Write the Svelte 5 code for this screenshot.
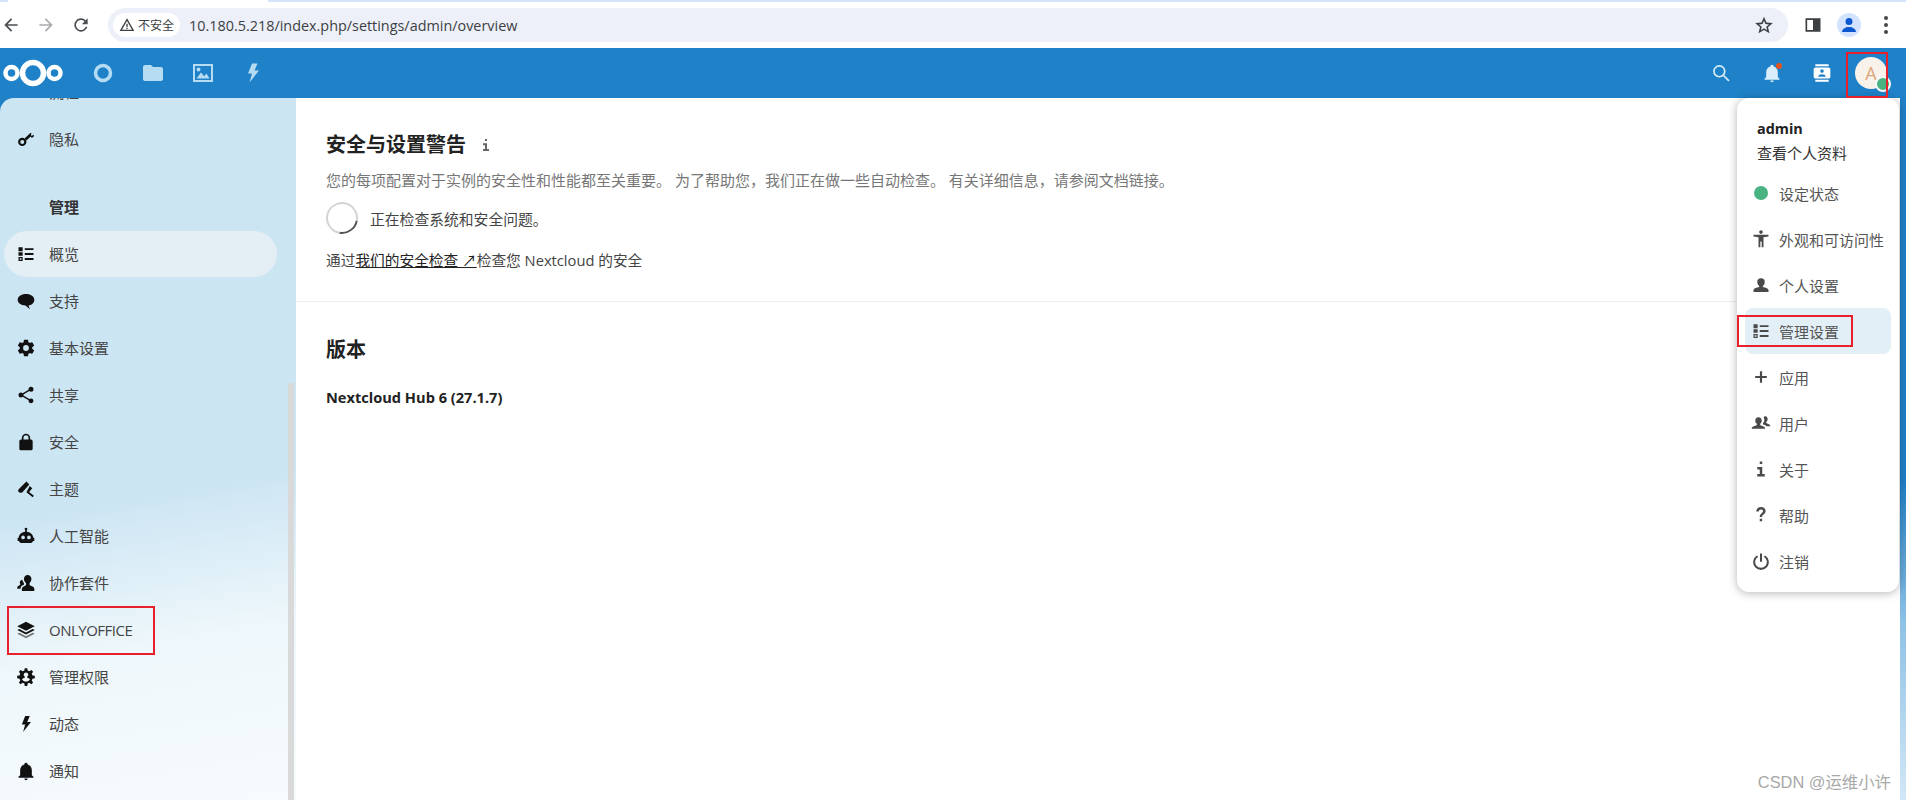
<script>
  const icons = {
    key: "M7.5 10.5a5 5 0 1 0 0 10 5 5 0 0 0 0-10zm0 2.6a2.4 2.4 0 1 1 0 4.8 2.4 2.4 0 0 1 0-4.8zM10.6 11.2 17.5 4.6l1.2 1.2-1 1 1.3 1.6 1.7-1.4 1.2 1.5-2 1.7-1.2.2-1-1.3-5.6 5.1z",
    list: "M3 4h5v4.600H3zM10.500 5h10.500v2.300H10.500zM10.500 10.900h10.500v2.300H10.500zM10.500 16.800h10.500v2.300H10.500zM3 10h5v4.200H3zM3 15.600h5v4.800H3zM4.500 17v2h2v-2z",
    chat: "M12 3.5c5.8 0 10 3 10 7s-3.600 6.600-7 6.900l1.600 4.600-5.200-4.600C6 17 2 14.500 2 10.500s4.200-7 10-7z",
    cog: "M12,15.5A3.5,3.5 0 0,1 8.5,12A3.5,3.5 0 0,1 12,8.5A3.5,3.5 0 0,1 15.5,12A3.5,3.5 0 0,1 12,15.5M19.43,12.97C19.47,12.65 19.5,12.33 19.5,12C19.5,11.67 19.47,11.34 19.43,11L21.54,9.37C21.73,9.22 21.78,8.95 21.66,8.73L19.66,5.27C19.54,5.05 19.27,4.96 19.05,5.05L16.56,6.05C16.04,5.66 15.5,5.32 14.87,5.07L14.5,2.42C14.46,2.18 14.25,2 14,2H10C9.75,2 9.54,2.18 9.5,2.42L9.13,5.07C8.5,5.32 7.96,5.66 7.44,6.05L4.95,5.05C4.73,4.96 4.46,5.05 4.34,5.27L2.34,8.73C2.21,8.95 2.27,9.22 2.46,9.37L4.57,11C4.53,11.34 4.5,11.67 4.5,12C4.5,12.33 4.53,12.65 4.57,12.97L2.46,14.63C2.27,14.78 2.21,15.05 2.34,15.27L4.34,18.73C4.46,18.95 4.73,19.03 4.95,18.95L7.44,17.94C7.96,18.34 8.5,18.68 9.13,18.93L9.5,21.58C9.54,21.82 9.75,22 10,22H14C14.25,22 14.46,21.82 14.5,21.58L14.87,18.93C15.5,18.67 16.04,18.34 16.56,17.94L19.05,18.95C19.27,19.03 19.54,18.95 19.66,18.73L21.66,15.27C21.78,15.05 21.73,14.78 21.54,14.63L19.43,12.97Z",
    share: "M18,16.08C17.24,16.08 16.56,16.38 16.04,16.85L8.91,12.7C8.96,12.47 9,12.24 9,12C9,11.76 8.96,11.53 8.91,11.3L15.96,7.19C16.5,7.69 17.21,8 18,8A3,3 0 0,0 21,5A3,3 0 0,0 18,2A3,3 0 0,0 15,5C15,5.24 15.04,5.47 15.09,5.7L8.04,9.81C7.5,9.31 6.79,9 6,9A3,3 0 0,0 3,12A3,3 0 0,0 6,15C6.79,15 7.5,14.69 8.04,14.19L15.16,18.34C15.11,18.55 15.08,18.77 15.08,19C15.08,20.61 16.39,21.91 18,21.91C19.61,21.91 20.92,20.61 20.92,19A2.92,2.92 0 0,0 18,16.08Z",
    lock: "M12,2A5,5 0 0,1 17,7V9H18A2,2 0 0,1 20,11V20A2,2 0 0,1 18,22H6A2,2 0 0,1 4,20V11A2,2 0 0,1 6,9H7V7A5,5 0 0,1 12,2M12,4A3,3 0 0,0 9,7V9H15V7A3,3 0 0,0 12,4Z",
    brush: "M12.500 3 16 6.500 8 15.500C6.500 17 4.300 16.800 3.200 15.600 2.200 14.500 2.300 13.200 3.500 12zM16.500 8.500 19.500 11 15.800 15.500 21.500 20 20 22 12.500 16z",
    robot: "M12 2a1.600 1.600 0 0 1 1 2.900V7c4.500.4 7.500 3.400 7.700 7H22v4h-1.500c-.5 1.500-1.800 2.500-3.500 2.500H7c-1.700 0-3-1-3.500-2.500H2v-4h1.300C3.500 10.400 6.500 7.400 11 7V4.900A1.600 1.600 0 0 1 12 2zM8.500 11.500a2.200 2.200 0 1 0 0 4.400 2.200 2.200 0 0 0 0-4.400zm7 0a2.200 2.200 0 1 0 0 4.400 2.200 2.200 0 0 0 0-4.400z",
    team: "M14 2.500c2.700 0 4.500 2.100 4.500 4.800 0 2-1 3.800-2.200 4.700v2c0 1 2.500 1.500 4.200 2.500 1 .6 1.500 1.500 1.500 2.700v2.300H7v-2.300c0-1.200.5-2.100 1.500-2.700 1.800-1 3.500-1.500 3.500-2.500v-2c-1.300-.9-2.500-2.700-2.500-4.700 0-2.700 1.800-4.800 4.500-4.800zM7.500 8c.4 1.600 1 3 2 4v2c-1.500.6-4 1.600-4 4v1H1.500v-2c0-1.500 3-2.500 3.500-3v-1.500C4 11.500 4.500 8.500 7.500 8z",
    layers: "M12 2 22.500 7.500 12 13 1.500 7.500zM4 10.800 12 15 20 10.800 22.500 12 12 17.500 1.500 12z",
    layers2: "M4 15.300 12 19.500 20 15.300 22.500 16.500 12 22 1.500 16.500z",
    admin: "M10.500 1.500h3l.5 2.800 2 .9 2.400-1.600 2.100 2.100-1.600 2.400.9 2 2.800.5v3l-2.800.5-.9 2 1.600 2.400-2.100 2.100-2.400-1.600-2 .9-.5 2.800h-3l-.5-2.800-2-.9-2.400 1.600-2.100-2.100 1.600-2.400-.9-2-2.800-.5v-3l2.800-.5.9-2-1.600-2.400L5.600 3.600 8 5.200l2-.9zM12 6.500a2.700 2.700 0 0 0-1.500 5v1.300c-1.600.4-3 1.200-3.300 2.200 1 1.500 2.800 2.500 4.800 2.500s3.800-1 4.800-2.500c-.3-1-1.700-1.800-3.300-2.200v-1.300a2.700 2.700 0 0 0-1.500-5z",
    bolt: "M11 2.500h5.500l-3 7H18L8.500 21.500l2.500-9H7z",
    bell: "M21,19V20H3V19L5,17V11C5,7.9 7.03,5.17 10,4.29C10,4.19 10,4.1 10,4A2,2 0 0,1 12,2A2,2 0 0,1 14,4C14,4.1 14,4.19 14,4.29C16.97,5.17 19,7.9 19,11V17L21,19M14,21A2,2 0 0,1 12,23A2,2 0 0,1 10,21",
    access: "M12 1.500a2.200 2.200 0 1 1 0 4.400 2.200 2.200 0 0 1 0-4.400zM3 7h18v2l-6 .8V22h-2.200v-7h-1.600v7H9V9.800L3 9z",
    person: "M12 4a4.500 4.500 0 0 1 4.500 4.500c0 2-1 3.800-2.300 4.700v1.300c2.800.6 6.800 1.800 6.800 3.500v2.500H3V18c0-1.700 4-2.900 6.800-3.500v-1.300C8.500 12.300 7.500 10.500 7.500 8.500A4.500 4.500 0 0 1 12 4z",
    plus: "M10.700 5h2.600v5.700H19v2.600h-5.700V19h-2.600v-5.700H5v-2.600h5.700z",
    users: "M9 5c2.500 0 3.900 2 3.900 4.200 0 1.600-.8 3-1.900 3.800v1.200c0 .8 2.500 1.300 4.500 2.300 1 .5 1.500 1.300 1.500 2.500H.8c0-1.200.5-2 1.500-2.500 2-1 4.700-1.500 4.700-2.300V13C5.900 12.200 5.100 10.800 5.100 9.200 5.100 7 6.500 5 9 5zM16.500 3.500c2.300 0 3.500 1.800 3.500 3.800 0 1.500-.7 2.700-1.700 3.400v1c0 .8 2.100 1.100 3.700 2 .9.500 1.200 1.200 1.200 2.300h-4.500c-1.300-1.200-3-1.800-4.400-2.400v-1.200c1-1 1.700-2.500 1.700-4.200 0-1-.3-2-.8-2.900.3-1 1.300-1.800 2.800-1.800z",
    info: "M10.500 3h3v3h-3zM7.500 9.500h6V18h3v3h-9v-3h3v-5.500h-3z",
    help: "M12 2.500c3.300 0 5.500 1.900 5.500 4.700 0 2.100-1.100 3.200-2.500 4.300-1.100.9-1.600 1.400-1.600 2.800h-2.900c0-2.500.9-3.400 2.200-4.500 1-.8 1.800-1.400 1.800-2.500 0-1.200-.9-2-2.500-2s-2.600.9-2.800 2.400H6.300C6.500 4.600 8.700 2.500 12 2.500zM10.500 16.500h2.900v3h-2.900z",
    power: "M13.200 3h-2.400v10h2.400zM17 5.300l-1.700 1.700a7 7 0 1 1-6.600 0L7 5.300a9.400 9.400 0 1 0 10 0z",
    folder: "M10 4H4c-1.100 0-2 .9-2 2v12c0 1.100.9 2 2 2h16c1.100 0 2-.9 2-2V8c0-1.100-.9-2-2-2h-8z",
    image: "M2 3h20v18H2zM4 5v14h16V5zM5.500 17.500l4.500-6 3.200 3.700 2.300-2.700 3 5zM7.500 6.500a2 2 0 1 1 0 4 2 2 0 0 1 0-4z",
    contact: "M4 1.500h16V4H4zM4 20h16v2.500H4zM4 5.500h16c1.100 0 2 .9 2 2v9c0 1.100-.9 2-2 2H4c-1.100 0-2-.9-2-2v-9c0-1.100.9-2 2-2zM12 7.500a2.200 2.200 0 1 0 0 4.400 2.200 2.200 0 0 0 0-4.400zM7.500 16.500h9c0-2-2-3-4.500-3s-4.500 1-4.500 3z",
  }

  const sideItems = [
    { label: "隐私", icon: "key" },
    { heading: "管理" },
    { label: "概览", icon: "list", active: true },
    { label: "支持", icon: "chat" },
    { label: "基本设置", icon: "cog" },
    { label: "共享", icon: "share" },
    { label: "安全", icon: "lock" },
    { label: "主题", icon: "brush" },
    { label: "人工智能", icon: "robot" },
    { label: "协作套件", icon: "team" },
    { label: "ONLYOFFICE", icon: "layers", marked: true },
    { label: "管理权限", icon: "admin" },
    { label: "动态", icon: "bolt" },
    { label: "通知", icon: "bell" },
  ]

  const menuItems = [
    { label: "设定状态", status: true },
    { label: "外观和可访问性", icon: "access" },
    { label: "个人设置", icon: "person" },
    { label: "管理设置", icon: "list", active: true },
    { label: "应用", icon: "plus" },
    { label: "用户", icon: "users" },
    { label: "关于", icon: "info" },
    { label: "帮助", icon: "help" },
    { label: "注销", icon: "power" },
  ]
</script>

<div class="page">
  <div class="tabstrip"></div>
  <div class="chrome">
    <div class="nav-buttons">
      <svg class="cb" viewBox="0 0 24 24"><path d="M20 11H7.800l5.600-5.600L12 4l-8 8 8 8 1.400-1.400L7.800 13H20z" /></svg>
      <svg class="cb dim" viewBox="0 0 24 24"><path d="M4 11h12.200l-5.600-5.600L12 4l8 8-8 8-1.400-1.400 5.600-5.600H4z" /></svg>
      <svg class="cb" viewBox="0 0 24 24"><path d="M17.650 6.350A8 8 0 1 0 19.730 14h-2.080a6 6 0 1 1-1.410-6.240L13 11h7V4z" /></svg>
    </div>
    <div class="omnibox">
      <div class="chip">
        <svg viewBox="0 0 24 24"><path fill-rule="evenodd" d="M12 2 23 21H1zM12 6 4.500 19h15zM11 10h2v5h-2zM11 16h2v2h-2z" /></svg>
        <span>不安全</span>
      </div>
      <span class="url">10.180.5.218/index.php/settings/admin/overview</span>
      <svg class="star" viewBox="0 0 24 24"><path fill-rule="evenodd" d="M12 2l3 7 7.600.6-5.800 5 1.800 7.400L12 18l-6.600 4 1.800-7.400-5.800-5L9 9zM12 6.900l-1.700 4-4.300.4 3.300 2.800-1 4.200 3.700-2.300 3.700 2.300-1-4.200 3.300-2.800-4.300-.4z" /></svg>
    </div>
    <div class="chrome-right">
      <svg class="panel" viewBox="0 0 24 24"><path fill-rule="evenodd" d="M3 4h18v16H3zM5 6v12h7V6z" /></svg>
      <div class="profile">
        <svg viewBox="0 0 24 24"><path d="M12 5a3.500 3.500 0 1 1 0 7 3.500 3.500 0 0 1 0-7zM5 19c0-3 3.500-5 7-5s7 2 7 5z" /></svg>
      </div>
      <div class="dots"><i></i><i></i><i></i></div>
    </div>
  </div>

  <header class="topbar">
    <svg class="logo" viewBox="0 0 60 30">
      <g fill="none" stroke="#fff">
        <circle cx="8.500" cy="15" r="6" stroke-width="4.500" />
        <circle cx="30" cy="15" r="10.500" stroke-width="5.500" />
        <circle cx="51.500" cy="15" r="6" stroke-width="4.500" />
      </g>
    </svg>
    <nav class="apps">
      <svg viewBox="0 0 24 24"><circle cx="12" cy="12" r="7.500" fill="none" stroke="currentColor" stroke-width="3.500" /></svg>
      <svg viewBox="0 0 24 24"><path d={icons.folder} /></svg>
      <svg viewBox="0 0 24 24"><path fill-rule="evenodd" d={icons.image} /></svg>
      <svg viewBox="0 0 24 24"><path d={icons.bolt} /></svg>
    </nav>
    <div class="actions">
      <svg class="search" viewBox="0 0 24 24"><circle cx="10" cy="10" r="6.500" fill="none" stroke="currentColor" stroke-width="2" /><path d="M15 15l6.500 6.500" stroke="currentColor" stroke-width="2" /></svg>
      <div class="bell">
        <svg viewBox="0 0 24 24"><path d={icons.bell} /></svg>
        <span class="badge"></span>
      </div>
      <svg class="contacts" viewBox="0 0 24 24"><path fill-rule="evenodd" d={icons.contact} /></svg>
      <div class="avatar">
        <span>A</span>
        <span class="online"></span>
      </div>
    </div>
  </header>

  <div class="body">
    <aside class="sidebar">
      <ul class="side-list">
        <li class="side-row"><span class="side-label">流程</span></li>
        {#each sideItems as item}
          {#if item.heading}
            <li class="side-heading">{item.heading}</li>
          {:else}
            <li class="side-row" class:active={item.active} class:marked={item.marked}>
              <svg viewBox="0 0 24 24">
                <path fill-rule="evenodd" d={icons[item.icon]} />
                {#if item.icon === "layers"}<path class="faded" d={icons.layers2} />{/if}
              </svg>
              <span class="side-label" class:latin={item.marked}>{item.label}</span>
            </li>
          {/if}
        {/each}
      </ul>
      <div class="scrollbar"></div>
    </aside>

    <main class="content">
      <section class="block first">
        <h2>安全与设置警告 <svg class="title-info" viewBox="0 0 24 24"><path d={icons.info} /></svg></h2>
        <p class="hint">您的每项配置对于实例的安全性和性能都至关重要。 为了帮助您，我们正在做一些自动检查。 有关详细信息，请参阅文档链接。</p>
        <div class="checking">
          <span class="spinner"></span>
          <span>正在检查系统和安全问题。</span>
        </div>
        <p class="via">通过<a href="#top">我们的安全检查 ↗</a>检查您 Nextcloud 的安全</p>
      </section>
      <section class="block">
        <h2>版本</h2>
        <p class="version">Nextcloud Hub 6 (27.1.7)</p>
      </section>
    </main>
  </div>

  <div class="menu">
    <div class="menu-user">
      <strong>admin</strong>
      <span>查看个人资料</span>
    </div>
    {#each menuItems as item}
      <div class="menu-row" class:active={item.active}>
        {#if item.status}
          <span class="status-dot"></span>
        {:else}
          <svg viewBox="0 0 24 24"><path fill-rule="evenodd" d={icons[item.icon]} /></svg>
        {/if}
        <span>{item.label}</span>
        {#if item.active}<span class="mark"></span>{/if}
      </div>
    {/each}
  </div>

  <div class="avatar-mark"></div>
  <div class="watermark">CSDN @运维小许</div>
</div>

<style>
  :global(body) {
    margin: 0;
    overflow: hidden;
  }
  .page {
    position: relative;
    width: 1906px;
    height: 800px;
    overflow: hidden;
    display: flex;
    flex-direction: column;
    font-family: "Open Sans", "Noto Sans CJK SC", sans-serif;
    background: linear-gradient(180deg, #1f80c6 0, #1f80c6 60%, #8fc2e6 78%, #d2e7f6 100%);
  }
  .tabstrip {
    height: 2px;
    flex: none;
    background: linear-gradient(90deg, #d6e4fb 0, #d6e4fb 8px, #fff 8px, #fff 268px, #d6e4fb 268px);
  }
  .chrome {
    height: 46px;
    background: #fff;
    display: flex;
    align-items: center;
    flex: none;
  }
  .nav-buttons {
    width: 108px;
    padding-left: 1px;
    box-sizing: border-box;
    display: flex;
    gap: 15px;
    flex: none;
  }
  .cb {
    width: 20px;
    height: 20px;
    fill: #4a4d52;
  }
  .cb.dim {
    fill: #a9abae;
  }
  .omnibox {
    width: 1680px;
    height: 34px;
    flex: none;
    border-radius: 17px;
    background: #edf0f9;
    display: flex;
    align-items: center;
    padding-left: 5px;
    box-sizing: border-box;
  }
  .chip {
    height: 24px;
    width: 67px;
    border-radius: 12px;
    background: #fff;
    display: flex;
    align-items: center;
    justify-content: center;
    gap: 3px;
    font-size: 12px;
    color: #3c4043;
  }
  .chip svg {
    width: 16px;
    height: 16px;
    fill: #3c4043;
  }
  .url {
    margin-left: 9px;
    font-size: 14.4px;
    color: #3c4043;
    flex: 1;
  }
  .star {
    width: 20px;
    height: 20px;
    fill: #3c4043;
    margin-right: 14px;
  }
  .chrome-right {
    flex: 1;
    display: flex;
    align-items: center;
    padding-left: 15px;
  }
  .panel {
    width: 20px;
    height: 20px;
    fill: #3c4043;
  }
  .profile {
    width: 24px;
    height: 24px;
    border-radius: 50%;
    background: #d3e3fd;
    margin-left: 14px;
    display: flex;
  }
  .profile svg {
    fill: #0b57d0;
  }
  .dots {
    margin-left: 23px;
    display: flex;
    flex-direction: column;
    gap: 3px;
  }
  .dots i {
    width: 4px;
    height: 4px;
    border-radius: 50%;
    background: #474747;
  }
  .topbar {
    height: 50px;
    flex: none;
    background: #1f82c9;
    display: flex;
    align-items: center;
    position: relative;
  }
  .logo {
    width: 60px;
    height: 30px;
    margin-left: 3px;
    flex: none;
  }
  .apps {
    display: flex;
    gap: 26px;
    margin-left: 28px;
    color: #b5dcf3;
  }
  .apps svg {
    width: 24px;
    height: 24px;
    fill: currentColor;
  }
  .actions {
    margin-left: auto;
    display: flex;
    align-items: center;
    color: #d9eefa;
    padding-right: 19px;
  }
  .search {
    width: 20px;
    height: 20px;
    margin-right: 31px;
  }
  .bell {
    position: relative;
    width: 20px;
    height: 20px;
    margin-right: 30px;
  }
  .bell svg {
    width: 20px;
    height: 20px;
    fill: currentColor;
  }
  .badge {
    position: absolute;
    top: 0;
    right: 0;
    width: 6px;
    height: 6px;
    border-radius: 50%;
    background: #e2541f;
  }
  .contacts {
    width: 20px;
    height: 20px;
    fill: #fff;
    margin-right: 23px;
  }
  .avatar {
    position: relative;
    width: 32px;
    height: 32px;
    border-radius: 50%;
    background: #f8f2ea;
    color: #dba679;
    font-size: 18px;
    display: flex;
    align-items: center;
    justify-content: center;
  }
  .online {
    position: absolute;
    right: -4px;
    bottom: -3px;
    width: 12px;
    height: 12px;
    border-radius: 50%;
    background: #49b382;
    border: 2px solid #f8f8f8;
  }
  .body {
    flex: 1;
    display: flex;
    min-height: 0;
    padding-right: 6px;
  }
  .sidebar {
    position: relative;
    width: 296px;
    flex: none;
    overflow: hidden;
    border-top-left-radius: 14px;
    background: linear-gradient(170deg, #cce5f3 0, #cce5f3 56%, #eef7fb 76%, #f7fbfd 100%);
  }
  .side-list {
    list-style: none;
    margin: -30px 0 0;
    padding: 0;
  }
  .side-row {
    height: 47px;
    display: flex;
    align-items: center;
    position: relative;
    font-size: 15px;
    color: #444;
    margin-right: 19px;
  }
  .side-row svg {
    width: 20px;
    height: 20px;
    margin-left: 16px;
    fill: #111;
    flex: none;
    position: relative;
  }
  .side-row .faded {
    fill: #777;
  }
  .side-label {
    position: absolute;
    left: 49px;
    white-space: nowrap;
  }
  .side-label.latin {
    letter-spacing: -0.5px;
  }
  .side-row.active::before {
    content: "";
    position: absolute;
    left: 4px;
    right: 0;
    top: 1px;
    bottom: 0;
    border-radius: 23px;
    background: #e3eff5;
  }
  .side-row.marked::after {
    content: "";
    position: absolute;
    left: 7px;
    top: 0;
    width: 148px;
    height: 49px;
    box-sizing: border-box;
    border: 2px solid #e8202c;
  }
  .side-heading {
    height: 22px;
    padding: 34px 0 12px 49px;
    line-height: 22px;
    font-size: 15px;
    font-weight: 600;
    color: #333;
  }
  .scrollbar {
    position: absolute;
    right: 2px;
    top: 285px;
    bottom: 0;
    width: 6px;
    background: #d9d9d9;
  }
  .content {
    flex: 1;
    background: #fff;
  }
  .block {
    padding: 0 30px;
  }
  .block.first {
    padding-bottom: 30px;
    border-bottom: 1px solid #ededed;
  }
  h2 {
    margin: 0;
    font-size: 20px;
    font-weight: 700;
    line-height: 28px;
    color: #222;
    display: flex;
    align-items: center;
  }
  .first h2 {
    padding-top: 33px;
  }
  .block:not(.first) h2 {
    padding-top: 34px;
  }
  .title-info {
    width: 16px;
    height: 16px;
    fill: #666;
    margin-left: 12px;
  }
  .hint {
    margin: 11px 0 0;
    font-size: 15px;
    line-height: 20px;
    color: #777;
  }
  .checking {
    display: flex;
    align-items: center;
    gap: 12px;
    margin-top: 12px;
    font-size: 14.8px;
    color: #444;
  }
  .spinner {
    width: 32px;
    height: 32px;
    box-sizing: border-box;
    border-radius: 50%;
    border: 2px solid #d4d4d4;
    border-bottom-color: #555;
    transform: rotate(-35deg);
  }
  .via {
    margin: 15px 0 0;
    font-size: 14.7px;
    line-height: 22px;
    color: #444;
  }
  .via a {
    color: #222;
    text-decoration: underline;
  }
  .version {
    margin: 23px 0 0;
    font-size: 14.6px;
    font-weight: 700;
    color: #222;
  }
  .menu {
    position: absolute;
    left: 1737px;
    top: 98px;
    width: 162px;
    height: 494px;
    box-sizing: border-box;
    background: #fff;
    border-radius: 12px;
    box-shadow: 0 1px 10px rgba(0, 0, 0, 0.3);
    padding: 0 8px;
  }
  .menu-user {
    display: flex;
    flex-direction: column;
    padding: 19px 0 0 12px;
    height: 72px;
    box-sizing: border-box;
    font-size: 15px;
    color: #333;
    line-height: 24px;
    white-space: nowrap;
  }
  .menu-user strong {
    font-size: 14.4px;
    font-weight: 700;
    color: #222;
  }
  .menu-row {
    position: relative;
    height: 46px;
    display: flex;
    align-items: center;
    gap: 8px;
    padding-left: 6px;
    font-size: 15px;
    color: #555;
    border-radius: 8px;
    white-space: nowrap;
  }
  .menu-row svg {
    width: 20px;
    height: 20px;
    fill: #4a4a4a;
    flex: none;
  }
  .status-dot {
    width: 14px;
    height: 14px;
    margin: 0 3px;
    border-radius: 50%;
    background: #49b382;
  }
  .menu-row.active {
    background: #e3eff6;
  }
  .mark {
    position: absolute;
    left: -8px;
    top: 7px;
    width: 116px;
    height: 32px;
    box-sizing: border-box;
    border: 2px solid #e8202c;
  }
  .avatar-mark {
    position: absolute;
    left: 1846px;
    top: 52px;
    width: 42px;
    height: 46px;
    box-sizing: border-box;
    border: 2px solid #e8202c;
  }
  .watermark {
    position: absolute;
    right: 15px;
    bottom: 7px;
    font-family: "Liberation Sans", "Noto Sans CJK SC", sans-serif;
    font-size: 16.4px;
    color: #a8a8a8;
  }
</style>
